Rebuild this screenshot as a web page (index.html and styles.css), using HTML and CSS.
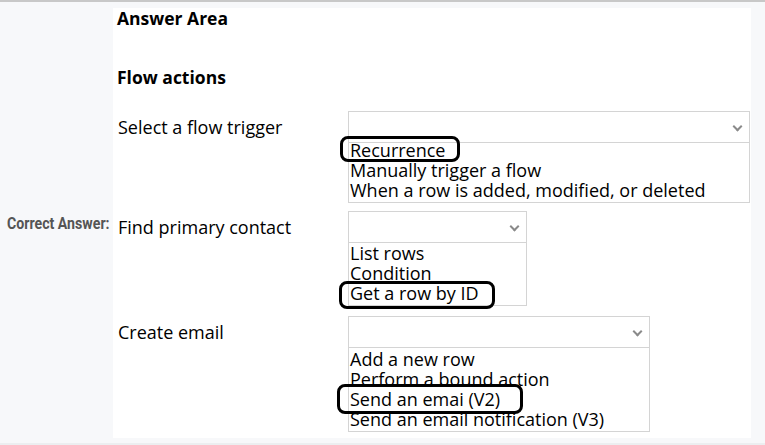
FILE: index.html
```html
<!DOCTYPE html>
<html>
<head>
<meta charset="utf-8">
<link rel="stylesheet" href="styles.css">
</head>
<body>
<div class="page">
  <div class="label-col"><span class="correct">Correct Answer:</span></div>
  <div class="panel">
    <h3 class="title">Answer Area</h3>
    <h3 class="subtitle">Flow actions</h3>
    <div class="row row1">
      <div class="row-label">Select a flow trigger</div>
      <div class="control w1">
        <div class="dropdown"><span class="chev"></span></div>
        <div class="listbox">
          <div class="opt"><span class="mark m1">Recurrence</span></div>
          <div class="opt">Manually trigger a flow</div>
          <div class="opt">When a row is added, modified, or deleted</div>
        </div>
      </div>
    </div>
    <div class="row row2">
      <div class="row-label">Find primary contact</div>
      <div class="control w2">
        <div class="dropdown"><span class="chev"></span></div>
        <div class="listbox lb2">
          <div class="opt">List rows</div>
          <div class="opt">Condition</div>
          <div class="opt"><span class="mark m2">Get a row by ID</span></div>
        </div>
      </div>
    </div>
    <div class="row row3">
      <div class="row-label">Create email</div>
      <div class="control w3">
        <div class="dropdown"><span class="chev"></span></div>
        <div class="listbox lb3">
          <div class="opt">Add a new row</div>
          <div class="opt">Perform a bound action</div>
          <div class="opt"><span class="mark m3">Send an emai (V2)</span></div>
          <div class="opt">Send an email notification (V3)</div>
        </div>
      </div>
    </div>
  </div>
</div>
</body>
</html>
```
FILE: styles.css
```css
html, body {
  margin: 0;
  padding: 0;
}
body {
  background: #f7f8fa;
  border-top: 2px solid #c8c8c8;
  height: 441px;
  border-bottom: 2px solid #eceef0;
  overflow: hidden;
  font-family: "Open Sans", "Noto Sans", sans-serif;
  color: #000;
}
.page {
  display: flex;
  padding-top: 6px;
}
.label-col {
  width: 113px;
  display: flex;
  align-items: center;
  flex: none;
  box-sizing: border-box;
}
.correct {
  font-family: Roboto, "Liberation Sans", sans-serif;
  font-weight: bold;
  font-size: 16px;
  color: #555;
  white-space: nowrap;
  display: inline-block;
  margin-left: 7px;
  transform: scaleX(0.885);
  transform-origin: left center;
}
.panel {
  width: 638px;
  height: 430px;
  background: #fff;
  padding-left: 4px;
  box-sizing: border-box;
}
.title, .subtitle {
  margin: 0;
  font-size: 17.5px;
  font-weight: bold;
  line-height: 20px;
}
.subtitle { margin-top: 39px; }
.row {
  display: flex;
  align-items: flex-start;
}
.row1 { margin-top: 24px; }
.row2 { margin-top: 8px; }
.row3 { margin-top: 10px; }
.row-label {
  width: 230px;
  flex: none;
  font-size: 18px;
  line-height: 20px;
  padding-top: 6px;
  padding-left: 1px;
}
.control { position: relative; }
.w1 { width: 402px; }
.w2 { width: 179px; }
.w3 { width: 302px; }
.dropdown {
  height: 32px;
  border: 1px solid #d4d4d4;
  box-sizing: border-box;
  position: relative;
}
.chev {
  position: absolute;
  right: 8px;
  top: 11px;
  width: 5px;
  height: 5px;
  border-right: 2px solid #8a8a8a;
  border-bottom: 2px solid #8a8a8a;
  transform: rotate(45deg);
}
.listbox {
  border: 1px solid #d4d4d4;
  border-top: none;
  height: 60px;
  box-sizing: border-box;
  font-size: 18px;
  line-height: 20px;
  padding-left: 1px;
}
.lb2 { height: 63px; padding-top: 3px; }
.lb3 { height: 84px; padding-top: 4px; }
.opt { white-space: nowrap; position: relative; top: -3px; }
.mark { position: relative; }
.mark::before {
  content: "";
  position: absolute;
  border: 3px solid #000;
  border-radius: 8px;
}
.m1::before { left: -10px; right: -15px; top: -2px; bottom: 0px; }
.m2::before { left: -11px; right: -16px; top: 0px; bottom: -4px; }
.m3::before { left: -13px; right: -23px; top: -3px; bottom: -3px; }
```
